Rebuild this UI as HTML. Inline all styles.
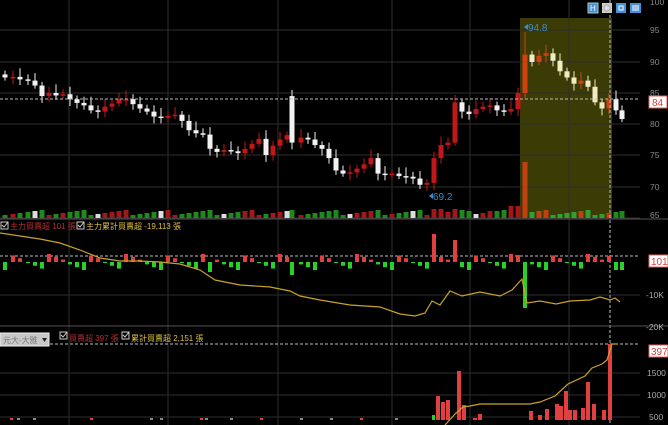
<!DOCTYPE html>
<html><head><meta charset="utf-8">
<style>
html,body{margin:0;padding:0;background:#000;width:668px;height:425px;overflow:hidden}
svg{display:block}
text{font-family:"Liberation Sans","Noto Sans CJK TC",sans-serif}
</style></head>
<body>
<svg id="s" width="668" height="425" xmlns="http://www.w3.org/2000/svg">
<rect width="668" height="425" fill="#000"/>
<rect x="520" y="18" width="92" height="200" fill="#3b3b06"/>
<g id="grid" stroke="#2e2e2e" stroke-width="1"></g>
<g id="cand"></g>
<line x1="0" y1="99" x2="640" y2="99" stroke="#bbb" stroke-dasharray="3,2"/>
<line x1="0" y1="256" x2="640" y2="256" stroke="#bbb" stroke-dasharray="3,2"/>
<line x1="0" y1="344" x2="640" y2="344" stroke="#bbb" stroke-dasharray="3,2"/>
<line x1="610" y1="0" x2="610" y2="425" stroke="#bbb" stroke-dasharray="3,2"/>
<line x1="0" y1="219" x2="668" y2="219" stroke="#555"/>
<line x1="0" y1="326" x2="668" y2="326" stroke="#555"/>
<g id="p2"></g>
<g id="p3"></g>
<polyline fill="none" stroke="#c9a227" stroke-width="1.2" points="0,233 20,236 40,239 60,243 80,250 100,258 120,261 140,261 160,262 180,264 200,270 215,280 240,285 270,287 290,291 300,296 320,300 350,305 380,307 400,314 415,316 425,313 432,301 440,305 450,291 462,296 480,292 500,296 512,290 522,279 527,303 540,301 556,304 570,301 590,300 600,297 610,300 615,298 620,302"/>
<polyline fill="none" stroke="#c9a227" stroke-width="1.2" points="445,425 455,414 463,407 470,406 480,404 500,404 530,404 540,402 555,396 568,384 585,376 592,368 602,364 607,360 612,344 618,344"/>
<g font-size="8.5" fill="#888">
<text x="650" y="5">100</text>
<text x="650" y="33">95</text>
<text x="650" y="65">90</text>
<text x="650" y="96">85</text>
<text x="650" y="127">80</text>
<text x="650" y="158">75</text>
<text x="650" y="190">70</text>
<text x="650" y="218">65</text>
<text x="646" y="298" fill="#aaa">-10K</text>
<text x="646" y="330" fill="#aaa">-20K</text>
<text x="647" y="376" fill="#aaa">1500</text>
<text x="647" y="398" fill="#aaa">1000</text>
<text x="649" y="420" fill="#aaa">500</text>
</g>
<rect x="649" y="96" width="18" height="12" fill="#fff" stroke="#e06060"/>
<text x="652" y="106" font-size="10" fill="#d04040">84</text>
<rect x="649" y="255" width="19" height="12" fill="#fff" stroke="#e06060"/>
<text x="651" y="265" font-size="10" fill="#d04040">101</text>
<rect x="649" y="345" width="19" height="12" fill="#fff" stroke="#e06060"/>
<text x="651" y="355" font-size="10" fill="#d04040">397</text>
<path d="M524 27 l4 -3 v6z" fill="#3a8cd0"/>
<text x="528" y="31" font-size="10" fill="#3a8cd0">94.8</text>
<path d="M429 196 l4 -3 v6z" fill="#3a8cd0"/>
<text x="433" y="200" font-size="10" fill="#3a8cd0">69.2</text>
<rect x="588" y="3" width="10" height="10" fill="#4a90d8" stroke="#9cc"/>
<text x="590" y="11" font-size="8" fill="#fff">H</text>
<rect x="602" y="3" width="10" height="10" fill="#ccc"/>
<circle cx="607" cy="8" r="3" fill="#ddd" stroke="#aaa"/>
<rect x="616" y="3" width="10" height="10" fill="#4a90d8"/>
<rect x="619" y="6" width="4" height="4" fill="none" stroke="#fff"/>
<rect x="630" y="3" width="11" height="10" fill="#4a90d8"/>
<path d="M632 6h7M632 8h7M632 10h7" stroke="#fff"/>
<g font-size="8">
<rect x="1" y="222" width="7" height="7" fill="none" stroke="#ccc"/>
<path d="M2 225l2 2 4-5" stroke="#ccc" fill="none"/>
<text x="10" y="229" fill="#b03030">主力買賣超 101 張</text>
<rect x="77" y="222" width="7" height="7" fill="none" stroke="#ccc"/>
<path d="M78 225l2 2 4-5" stroke="#ccc" fill="none"/>
<text x="86" y="229" fill="#e0c040">主力累計買賣超 -19,113 張</text>
<rect x="0" y="333" width="49" height="13" fill="#c8c8c8" stroke="#eee"/>
<text x="3" y="343" fill="#777">元大-大雅</text>
<path d="M42 338h5l-2.5 4z" fill="#222"/>
<rect x="60" y="332" width="7" height="7" fill="none" stroke="#ccc"/>
<path d="M61 335l2 2 4-5" stroke="#ccc" fill="none"/>
<text x="69" y="341" fill="#b03030">買賣超 397 張</text>
<rect x="122" y="332" width="7" height="7" fill="none" stroke="#ccc"/>
<path d="M123 335l2 2 4-5" stroke="#ccc" fill="none"/>
<text x="131" y="341" fill="#e0c040">累計買賣超 2,151 張</text>
</g>
<script>
var NS="http://www.w3.org/2000/svg";
function el(g,t,a){var e=document.createElementNS(NS,t);for(var k in a)e.setAttribute(k,a[k]);document.getElementById(g).appendChild(e);return e;}
[69,168,278,392,470,569].forEach(function(x){el("grid","line",{x1:x,y1:0,x2:x,y2:425});});
[30,62,93,124,155,187,218,295,373,395,417].forEach(function(y){el("grid","line",{x1:0,y1:y,x2:640,y2:y});});
var cl=[[5,87.5],[13,87.6],[20,87.2],[28,87],[35,86.2],[42,84.5],[49,85],[56,84.6],[63,84.8],[70,84],[77,83.4],[84,83],[91,82.2],[98,82],[105,82.8],[112,83.3],[119,84],[126,84],[133,83.2],[140,82.5],[147,82],[154,81.2],[161,81],[168,81.3],[175,81.5],[182,80.5],[189,79],[196,78.5],[203,78.3],[210,76],[217,75.5],[224,75.8],[231,75.6],[238,75.3],[245,76],[252,76.8],[259,77.6],[266,75],[273,76.5],[280,77.5],[287,78.2],[292,77],[301,77.8],[308,77.5],[315,76.6],[322,76],[329,74.5],[336,72.5],[343,72],[350,72.2],[357,72.8],[364,73.5],[371,74.5],[378,72],[385,71.8],[392,72],[399,71.6],[406,71.5],[413,71.2],[420,70.2],[427,70.5],[434,74.5],[441,76.6],[448,77],[455,83.5],[462,82],[469,81.6],[476,82.4],[483,82.8],[490,83],[497,82.2],[504,82],[511,82.4],[518,85],[525,91.2],[532,90],[539,91],[546,91.4],[553,90.2],[560,88.5],[567,87.5],[574,86.5],[581,87],[588,86],[595,83.5],[602,82.5],[609,84],[616,82.2],[622,80.8]];
function Y(p){return 62+(90-p)*6.2;}
cl.forEach(function(c,i){
 var x=c[0],o=(i==0)?88:cl[i-1][1],cv=c[1];
 if(x==292)o=84.5;
 var up=cv>=o;
 var col=up?"#c01818":"#f2f2f2";
 if(x>=520&&x<=612) col=up?"#d04010":"#f0ecc0";
 var hi=Math.max(o,cv)+0.6+((i*7)%5)*0.2,lo=Math.min(o,cv)-0.5-((i*3)%4)*0.2;
 if(x==525)hi=94.8; if(x==427)lo=69.2;
 el("cand","line",{x1:x,y1:Y(hi),x2:x,y2:Y(lo),stroke:col});
 var t=Y(Math.max(o,cv)),h=Math.max(1.5,Math.abs(Y(o)-Y(cv)));
 el("cand","rect",{x:x-2.5,y:t,width:5,height:h,fill:col});
 var vh=3+((i*37)%6);
 if(x==525)vh=56; if(x==434||x==455||x==441)vh=9; if(x==469||x==490)vh=7; if(x==518||x==511)vh=12;
 var vc=up?"#a01818":"#1e8a1e"; if(i%9==4)vc="#ddd";
 if(x>=520&&x<=612) vc=up?"#c04010":"#30a030";
 el("cand","rect",{x:x-2.5,y:218-vh,width:5,height:vh,fill:vc});
 var b=((i*53)%11)-5; var h2=Math.abs(b)*1.4+1;
 if(x==434)b=20,h2=28; if(x==455)b=20,h2=22; if(x==518)b=20,h2=7; if(x==609)b=20,h2=6;
 if(x==525)b=-20,h2=46; if(x==210)b=-3,h2=10; if(x==292)b=-3,h2=13; if(x==616)b=-3,h2=8;
 if(b>0) el("p2","rect",{x:x-2,y:262-h2,width:4,height:h2,fill:"#e04040"});
 else el("p2","rect",{x:x-2,y:262,width:4,height:h2,fill:"#28d028"});
});
[[438,396],[443,402],[448,400],[459,371],[464,405],[475,418],[480,414],[531,411],[540,415],[547,409],[557,404],[561,406],[566,391],[570,410],[575,410],[583,408],[588,382],[594,404],[604,410]].forEach(function(b){
 el("p3","rect",{x:b[0]-2,y:b[1],width:4,height:420-b[1],fill:"#e04040"});});
el("p3","rect",{x:608,y:344,width:4,height:76,fill:"#e04040"});
[10,17,33,90,150,160,200,205,230,260,300,330,360,395].forEach(function(x,i){el("p3","rect",{x:x,y:418,width:3,height:2,fill:i%3?"#888":"#e04040"});});
el("p3","rect",{x:432,y:415,width:3,height:5,fill:"#28d028"});
</script>
</svg>
</body></html>
